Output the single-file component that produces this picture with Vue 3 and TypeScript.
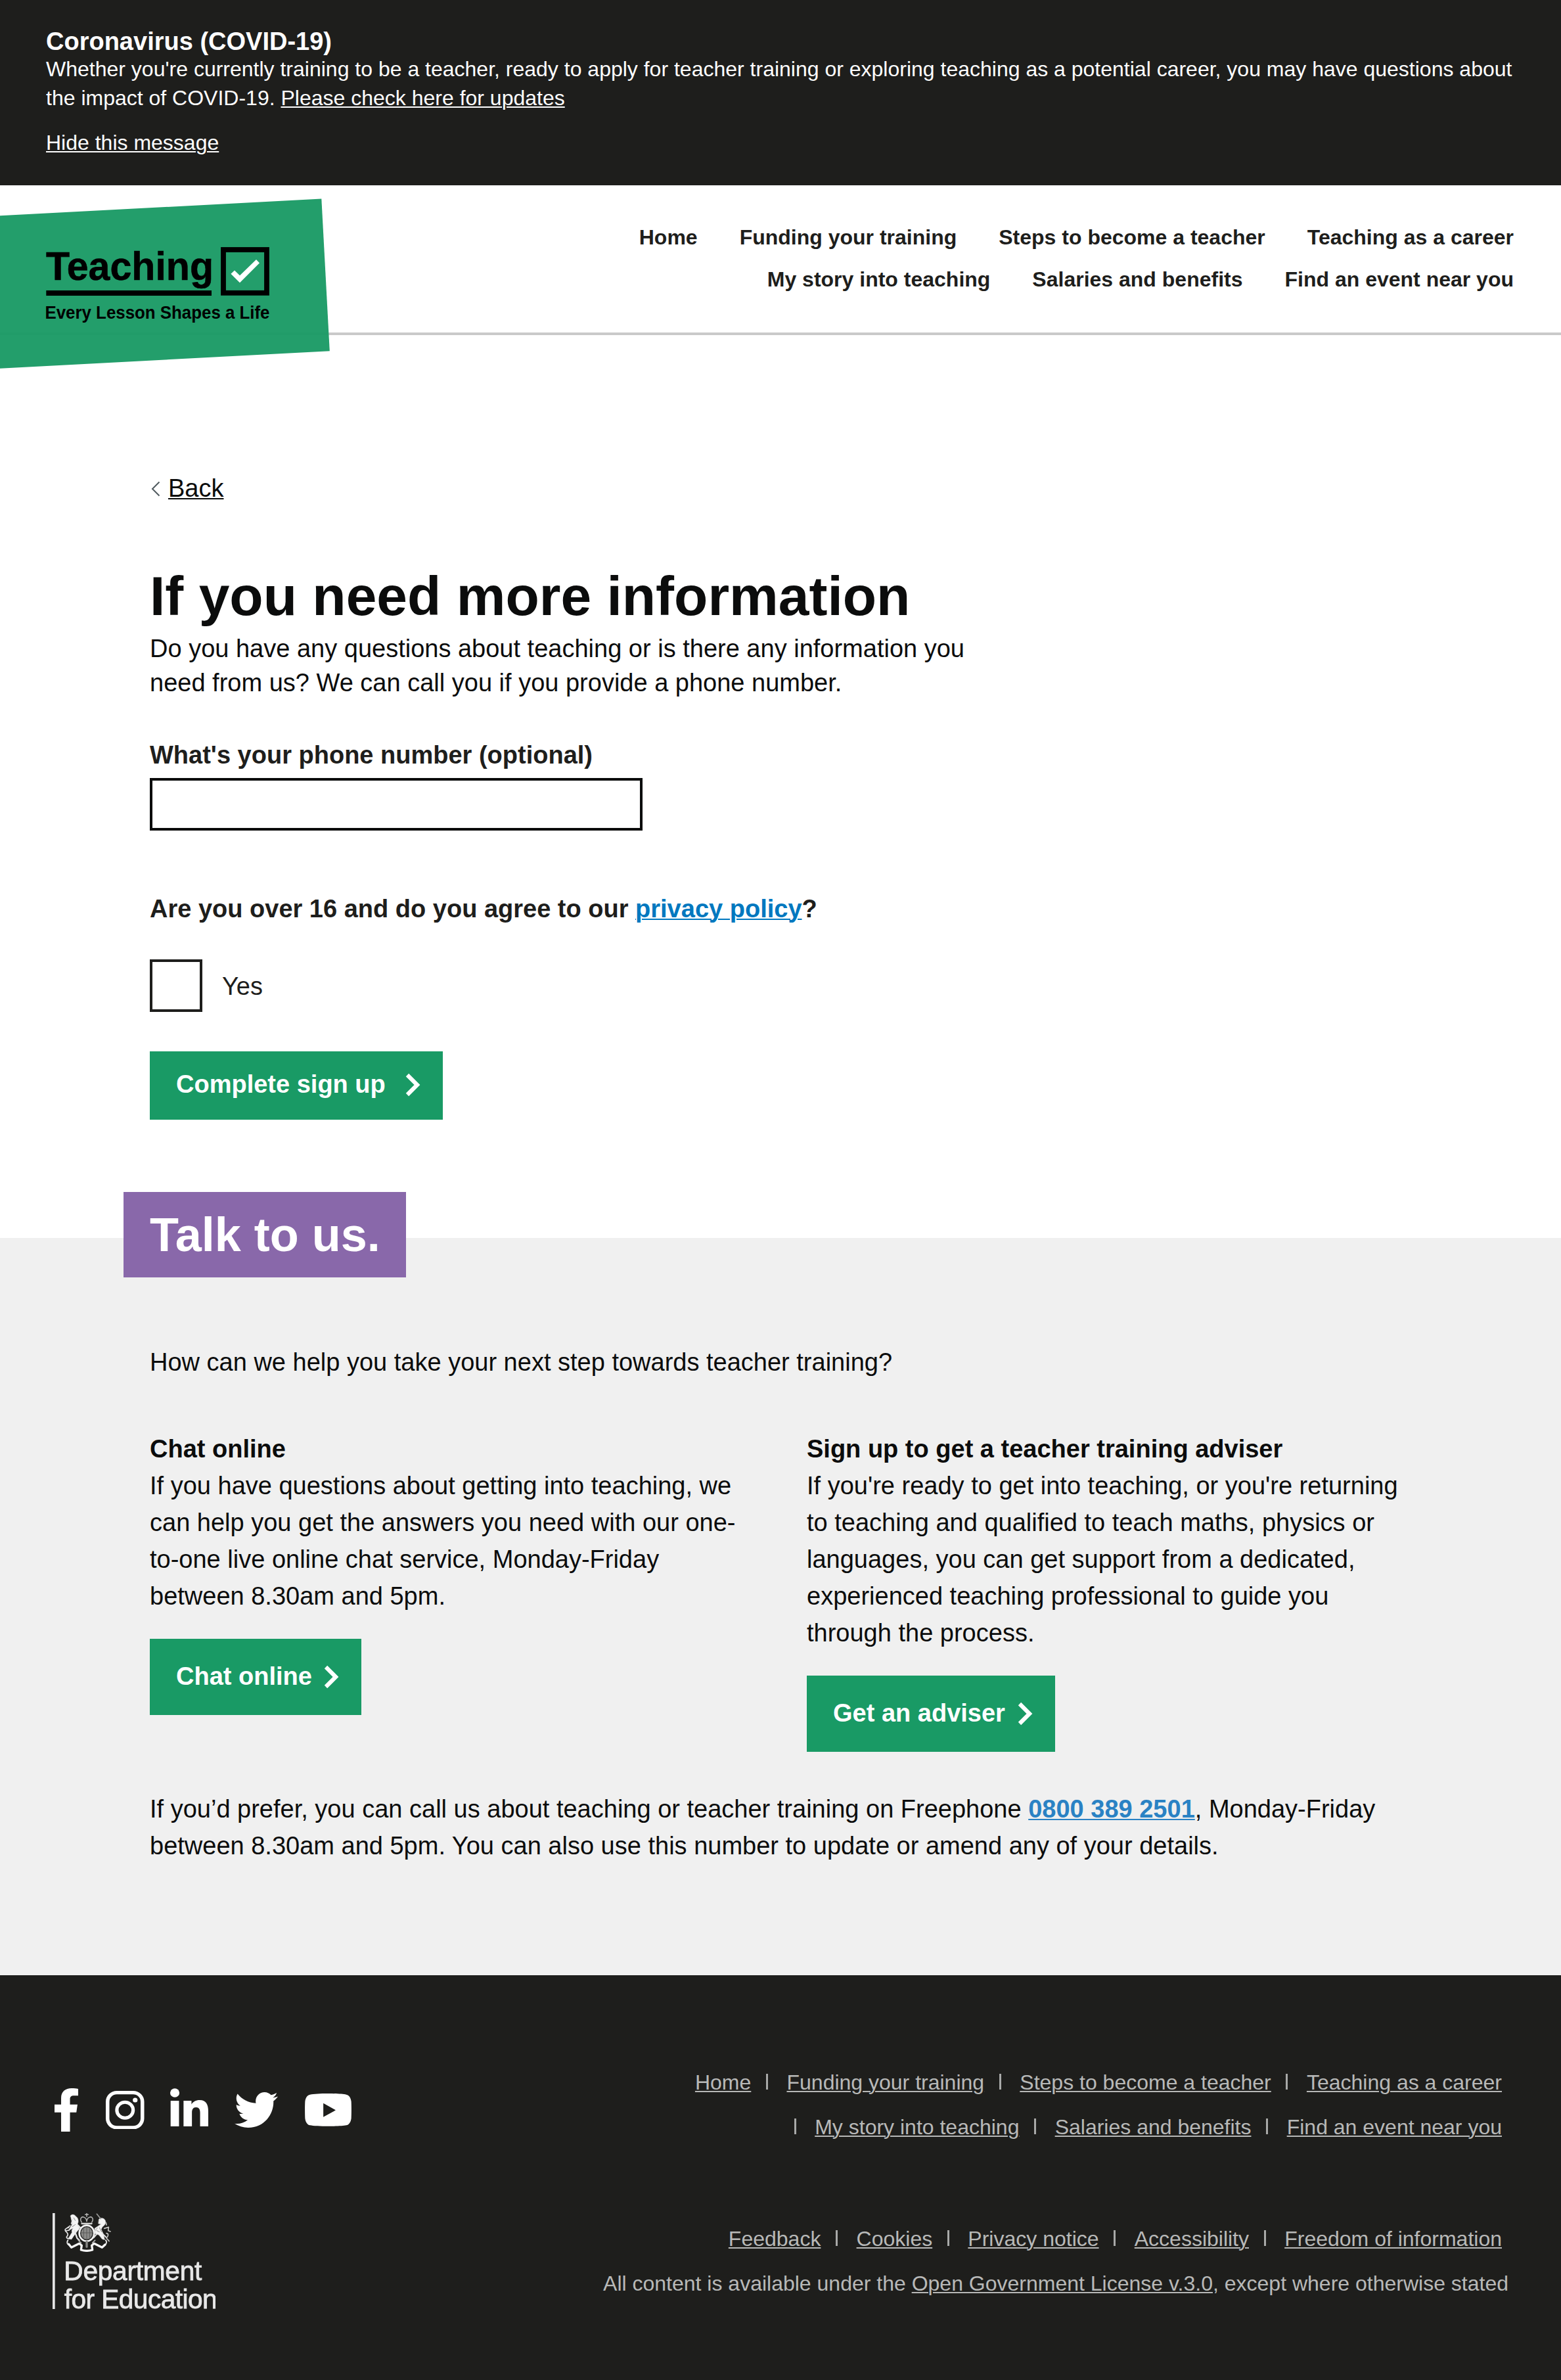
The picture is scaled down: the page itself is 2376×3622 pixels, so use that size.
<script setup lang="ts">
interface NavLink {
  label: string
  leadingBar?: boolean
}

const primaryRows: string[][] = [
  ['Home', 'Funding your training', 'Steps to become a teacher', 'Teaching as a career'],
  ['My story into teaching', 'Salaries and benefits', 'Find an event near you'],
]

const footerSiteRows: NavLink[][] = [
  [
    { label: 'Home' },
    { label: 'Funding your training', leadingBar: true },
    { label: 'Steps to become a teacher', leadingBar: true },
    { label: 'Teaching as a career', leadingBar: true },
  ],
  [
    { label: 'My story into teaching', leadingBar: true },
    { label: 'Salaries and benefits', leadingBar: true },
    { label: 'Find an event near you', leadingBar: true },
  ],
]

const footerLegal: NavLink[] = [
  { label: 'Feedback' },
  { label: 'Cookies', leadingBar: true },
  { label: 'Privacy notice', leadingBar: true },
  { label: 'Accessibility', leadingBar: true },
  { label: 'Freedom of information', leadingBar: true },
]
</script>

<template>
  <div class="page">
    <section class="notice">
      <h2 class="notice-title">Coronavirus (COVID-19)</h2>
      <p class="notice-text">
        Whether you're currently training to be a teacher, ready to apply for teacher training or exploring teaching as a potential career, you may have questions about the impact of COVID-19. <a class="link">Please check here for updates</a>
      </p>
      <a class="link notice-hide">Hide this message</a>
    </section>

    <header class="header">
      <svg class="logo" width="502" height="262" viewBox="0 300 502 262">
        <polygon points="0,328.3 489.3,302.5 501.8,534.3 0,560.7" fill="#179963" fill-opacity="0.95" />
        <text x="70" y="425.5" font-size="62" textLength="255" lengthAdjust="spacingAndGlyphs" stroke="#000" stroke-width="0.6">Teaching</text>
        <rect x="70.3" y="442" width="251.7" height="8" />
        <rect x="340" y="380" width="66" height="65.8" fill="none" stroke="#000" stroke-width="7.8" />
        <polygon points="351.4,416.7 357,411.6 365,419.3 390,395 395,400.3 365,430.3" fill="#fff" />
        <text x="68.5" y="485" font-size="27" textLength="342" lengthAdjust="spacingAndGlyphs">Every Lesson Shapes a Life</text>
      </svg>
      <nav class="nav">
        <div v-for="(row, i) in primaryRows" :key="i" class="nav-row">
          <a v-for="item in row" :key="item">{{ item }}</a>
        </div>
      </nav>
    </header>

    <main class="main">
      <div class="back">
        <svg width="14" height="24" viewBox="0 0 14 24">
          <path d="M12.5 1.5 L2 12 L12.5 22.5" fill="none" stroke="#505a5f" stroke-width="2" />
        </svg>
        <a class="link">Back</a>
      </div>
      <h1>If you need more information</h1>
      <p class="intro">Do you have any questions about teaching or is there any information you need from us? We can call you if you provide a phone number.</p>
      <label class="label" for="phone">What's your phone number (optional)</label>
      <input id="phone" class="input" type="tel" />
      <p class="label question">Are you over 16 and do you agree to our <a class="link blue">privacy policy</a>?</p>
      <div class="check">
        <span class="box"></span>
        <span class="check-label">Yes</span>
      </div>
      <button type="button" class="button submit">
        <span>Complete sign up</span>
        <svg width="23" height="36" viewBox="0 0 23 36"><path d="M3 3 L18 18 L3 33" /></svg>
      </button>
    </main>

    <section class="talk">
      <h2 class="talk-title">Talk to us.</h2>
      <p class="lead">How can we help you take your next step towards teacher training?</p>
      <div class="columns">
        <div class="column">
          <h3>Chat online</h3>
          <p>If you have questions about getting into teaching, we can help you get the answers you need with our one-to-one live online chat service, Monday-Friday between 8.30am and 5pm.</p>
          <button type="button" class="button">
            <span>Chat online</span>
            <svg width="23" height="36" viewBox="0 0 23 36"><path d="M3 3 L18 18 L3 33" /></svg>
          </button>
        </div>
        <div class="column">
          <h3>Sign up to get a teacher training adviser</h3>
          <p>If you're ready to get into teaching, or you're returning to teaching and qualified to teach maths, physics or languages, you can get support from a dedicated, experienced teaching professional to guide you through the process.</p>
          <button type="button" class="button">
            <span>Get an adviser</span>
            <svg width="23" height="36" viewBox="0 0 23 36"><path d="M3 3 L18 18 L3 33" /></svg>
          </button>
        </div>
      </div>
      <p class="phone">If you’d prefer, you can call us about teaching or teacher training on Freephone <a class="link tel">0800 389 2501</a>, Monday-Friday between 8.30am and 5pm. You can also use this number to update or amend any of your details.</p>
    </section>

    <footer class="footer">
      <div class="brand">
        <div class="social">
          <svg class="fb" viewBox="125 174 104 199" preserveAspectRatio="none">
            <path d="M154 373V285H125V249H154V219C154 190 172 174 200 174C212 174 222 175 229 177V208H211C197 208 193 214 193 224V249H226L221 285H193V373Z" />
          </svg>
          <svg class="ig" viewBox="351 186 170 175" preserveAspectRatio="none">
            <rect x="359" y="194" width="154" height="159" rx="41" fill="none" stroke="#fff" stroke-width="16" />
            <circle cx="436" cy="273.5" r="36" fill="none" stroke="#fff" stroke-width="15" />
            <circle cx="481" cy="228" r="10.5" />
          </svg>
          <svg class="li" viewBox="636 174 168 175" preserveAspectRatio="none">
            <circle cx="656.5" cy="195" r="20.5" />
            <rect x="638" y="231" width="37" height="118" />
            <path d="M695 231H730V247C737 236 749 228 766 228C795 228 804 249 804 278V349H768V285C768 270 763 261 750 261C737 261 732 271 732 285V349H695Z" />
          </svg>
          <svg class="tw" viewBox="0 48 512 416" preserveAspectRatio="none">
            <path d="M459.37 151.716c.325 4.548.325 9.097.325 13.645 0 138.72-105.583 298.558-298.558 298.558-59.452 0-114.68-17.219-161.137-47.106 8.447.974 16.568 1.299 25.34 1.299 49.055 0 94.213-16.568 130.274-44.832-46.132-.975-84.792-31.188-98.112-72.772 6.498.974 12.995 1.624 19.818 1.624 9.421 0 18.843-1.3 27.614-3.573-48.081-9.747-84.143-51.98-84.143-102.985v-1.299c13.969 7.797 30.214 12.67 47.431 13.319-28.264-18.843-46.781-51.005-46.781-87.391 0-19.492 5.197-37.36 14.294-52.954 51.655 63.675 129.3 105.258 216.365 109.807-1.624-7.797-2.599-15.918-2.599-24.04 0-57.828 46.782-104.934 104.934-104.934 30.213 0 57.502 12.67 76.67 33.137 23.715-4.548 46.456-13.32 66.599-25.34-7.798 24.366-24.366 44.833-46.132 57.827 21.117-2.273 41.584-8.122 60.426-16.243-14.292 20.791-32.161 39.308-52.628 54.253z" />
          </svg>
          <svg class="yt" viewBox="1231 198 207 150" preserveAspectRatio="none">
            <path fill-rule="evenodd" d="M1334 198C1370 198 1400 200 1415 203C1428 206 1435 218 1437 235C1438 255 1438 292 1437 311C1435 328 1428 340 1415 343C1390 349 1280 349 1254 343C1241 340 1234 328 1232 311C1231 290 1231 255 1232 235C1234 218 1241 206 1254 203C1270 200 1300 198 1334 198ZM1313 242V305L1368 274Z" />
          </svg>
        </div>

        <svg class="dfe" width="248" height="146" viewBox="12 18 744 438">
          <rect x="12" y="18" width="11" height="438" fill="#e4e4e4" />
          <g class="crest" fill="none" stroke="#e6e6e6" stroke-linecap="round" stroke-linejoin="round">
            <!-- garter and shield -->
            <ellipse cx="168" cy="110" rx="34" ry="36" stroke-width="8" stroke="#f4f4f4" />
            <ellipse cx="168" cy="110" rx="26" ry="28" fill="#8b8b89" stroke="#5c5c5a" stroke-width="2" />
            <path d="M168 84V136M144 108H192M154 90V130M181 90V130" stroke="#5a5a58" stroke-width="3" />
            <!-- crown -->
            <path d="M168 18V34M161 25H175M145 60C134 44 144 32 156 37C163 40 167 46 168 56C169 46 173 40 180 37C192 32 202 44 191 60" stroke="#b5b5b3" stroke-width="4.5" />
            <path d="M146 66H190" stroke="#d5d5d3" stroke-width="8" />
            <!-- lion -->
            <path d="M94 30C101 22 112 24 118 33C130 40 132 58 126 68C138 82 136 92 128 96L112 118L98 138L84 134L101 106C98 98 102 92 106 86L84 98L100 72C104 60 97 48 96 38Z" fill="#f4f4f4" stroke="#e6e6e6" stroke-width="2" />
            <path d="M92 76L70 92M88 96L72 99M104 47L98 66M108 74L96 84M86 84C72 86 66 94 72 101C80 108 86 116 78 124C72 130 80 136 90 134" stroke-width="5" />
            <path d="M112 98L124 132L134 142M128 74L138 84" stroke-width="7" />
            <path d="M109 40L116 52M103 80L116 70" stroke="#7b7b79" stroke-width="2.5" />
            <!-- unicorn -->
            <path d="M224 46C232 38 247 40 252 51C258 62 250 75 240 80L234 92L244 114L250 140L238 136L224 118L206 112L204 88L216 80L234 68L222 66Z" fill="#f4f4f4" stroke="#e6e6e6" stroke-width="2" />
            <path d="M214 22L232 44" stroke="#9d9d9b" stroke-width="5" />
            <path d="M248 88L268 82M268 82L266 98L276 102M256 62L258 72M216 86L208 96M258 110C270 112 266 124 258 132L270 146" stroke-width="5" stroke="#c6c6c4" />
            <path d="M212 116L200 130M240 112L256 128" stroke-width="6" />
            <path d="M226 84L236 104M214 98L226 104" stroke="#7b7b79" stroke-width="2.5" />
            <!-- ribbon and compartment -->
            <path d="M82 142C76 150 78 160 88 164M255 142C262 150 258 160 248 164" stroke-width="6" />
            <path d="M86 160L98 175L134 157L145 166L142 186C158 191 178 191 194 186L191 166L202 157L238 175L252 162" stroke-width="10" stroke="#f6f6f6" />
            <path d="M130 142L142 154M206 142L194 154" stroke-width="5" stroke="#b5b5b3" />
            <path d="M168 148V172" stroke-width="10" stroke="#878785" />
          </g>
          <g class="dfe-text" fill="#e8e8e8" stroke="#e8e8e8" stroke-width="2.4">
            <text x="64" y="325" font-size="122" textLength="630" lengthAdjust="spacing">Department</text>
            <text x="65" y="454" font-size="122" textLength="699" lengthAdjust="spacing">for Education</text>
          </g>
        </svg>
      </div>

      <div class="footer-links">
        <div class="group">
          <div v-for="(row, i) in footerSiteRows" :key="i" class="footer-row">
            <span v-for="item in row" :key="item.label" class="entry">
              <i v-if="item.leadingBar" class="bar"></i>
              <a class="link">{{ item.label }}</a>
            </span>
          </div>
        </div>
        <div class="group">
          <div class="footer-row">
            <span v-for="item in footerLegal" :key="item.label" class="entry">
              <i v-if="item.leadingBar" class="bar"></i>
              <a class="link">{{ item.label }}</a>
            </span>
          </div>
          <p class="licence">All content is available under the <a class="link">Open Government License v.3.0</a>, except where otherwise stated</p>
        </div>
      </div>
    </footer>
  </div>
</template>

<style>
body {
  margin: 0;
  background: #fff;
}
</style>

<style scoped>
.page {
  width: 2376px;
  height: 3622px;
  display: flex;
  flex-direction: column;
  overflow: hidden;
  color: #0b0c0c;
  font-family: "Liberation Sans", Arial, Helvetica, sans-serif;
  font-size: 38px;
}

h1, h2, h3, p {
  margin: 0;
}

.link {
  text-decoration: underline;
  text-decoration-thickness: 2px;
  text-underline-offset: 2px;
}

/* Notice banner */
.notice {
  box-sizing: border-box;
  height: 282px;
  padding: 43px 68px 0 70px;
  background: #1e1e1c;
  color: #fff;
  font-size: 32px;
  line-height: 44px;
}

.notice-title {
  font-size: 38px;
  line-height: 40px;
}

.notice-hide {
  display: inline-block;
  margin-top: 24px;
}

/* Header */
.header {
  position: relative;
  box-sizing: border-box;
  height: 228px;
  padding: 47px 72px 0 0;
  border-bottom: 4px solid #cacaca;
}

.logo {
  position: absolute;
  top: 18px;
  left: 0;
  font-weight: 700;
}

.nav-row {
  display: flex;
  justify-content: flex-end;
  gap: 64px;
  color: #1e1e1c;
  font-size: 32px;
  font-weight: 700;
  line-height: 64px;
}

/* Form */
.main {
  box-sizing: border-box;
  height: 1374px;
  padding: 209px 228px 0;
  display: flex;
  flex-direction: column;
  align-items: flex-start;
}

.back {
  display: flex;
  align-items: center;
  gap: 12px;
  padding-left: 2px;
  line-height: 48px;
}

.back svg {
  margin-top: 2px;
}

h1 {
  margin-top: 98px;
  font-size: 84px;
  line-height: 84px;
}

.intro {
  width: 1300px;
  margin-top: 12px;
  line-height: 52px;
}

.label {
  margin-top: 60px;
  color: #1e1e1c;
  font-weight: 700;
  line-height: 48px;
}

.input {
  box-sizing: border-box;
  width: 750px;
  height: 80px;
  margin-top: 11px;
  border: 4px solid #0b0c0c;
  border-radius: 0;
  background: #fff;
}

.question {
  margin-top: 95px;
}

.blue {
  color: #0078bf;
}

.check {
  display: flex;
  align-items: center;
  gap: 30px;
  margin-top: 53px;
  color: #1e1e1c;
}

.box {
  box-sizing: border-box;
  width: 80px;
  height: 80px;
  border: 4px solid #1e1e1c;
}

.check-label {
  margin-top: 2px;
  line-height: 50px;
}

.button {
  display: flex;
  align-items: center;
  gap: 18.6px;
  height: 116px;
  margin: 37px 0 0;
  padding: 0 34px 0 40px;
  border: 0;
  background: #199a65;
  color: #fff;
  font: 700 38px/48px "Liberation Sans", Arial, Helvetica, sans-serif;
}

.button span {
  margin-top: -2px;
}

.button svg {
  fill: none;
  stroke: #fff;
  stroke-width: 6.2;
}

.submit {
  height: 104px;
  margin-top: 60px;
  gap: 30px;
}

.submit span {
  margin-top: -5px;
}

.submit svg {
  margin-top: -2px;
}

/* Talk to us */
.talk {
  box-sizing: border-box;
  height: 1122px;
  padding: 0 228px;
  background: #f0f0f0;
  line-height: 56px;
}

.talk-title {
  box-sizing: border-box;
  width: 430px;
  height: 130px;
  margin: -70px 0 0 -40px;
  padding-left: 40px;
  position: relative;
  background: #8968aa;
  color: #fff;
  font-size: 72px;
  line-height: 130px;
}

.lead {
  margin-top: 101px;
}

.columns {
  display: flex;
  gap: 100px;
  margin-top: 76px;
}

.column {
  width: 900px;
}

.column + .column {
  width: 920px;
}

h3 {
  font-size: 38px;
}

.phone {
  margin-top: 59px;
}

.tel {
  color: #2a82c4;
  font-weight: 700;
}

/* Footer */
.footer {
  flex: 1;
  display: flex;
  justify-content: space-between;
  padding: 0 90px 0 80px;
  background: #1e1e1c;
  color: #b8b9b8;
  font-size: 32px;
}

.brand {
  padding-top: 172px;
}

.social {
  display: flex;
  align-items: center;
  height: 66px;
  padding-left: 3px;
  fill: #fff;
}

.fb {
  width: 36px;
  height: 66px;
}

.ig {
  width: 58.5px;
  height: 58.5px;
  margin-left: 42px;
}

.li {
  width: 58px;
  height: 58.5px;
  margin: 0 0 8px 39.5px;
}

.tw {
  width: 66px;
  height: 54px;
  margin-left: 40px;
}

.yt {
  width: 71px;
  height: 50px;
  margin-left: 41px;
}

.dfe {
  display: block;
  margin-top: 124px;
  overflow: hidden;
}

.crest {
  filter: blur(1.6px);
}

.dfe-text {
  filter: blur(1.2px);
}

.footer-links {
  padding-top: 129px;
  line-height: 68px;
}

.group + .group {
  margin-top: 102px;
}

.footer-row {
  display: flex;
  justify-content: flex-end;
}

.entry {
  display: flex;
  align-items: center;
}

.bar {
  width: 3px;
  height: 24px;
  margin: -2px 28.6px 0 22.6px;
  background: #a8a9a8;
}

.licence {
  margin-right: -10px;
  text-align: right;
}
</style>
